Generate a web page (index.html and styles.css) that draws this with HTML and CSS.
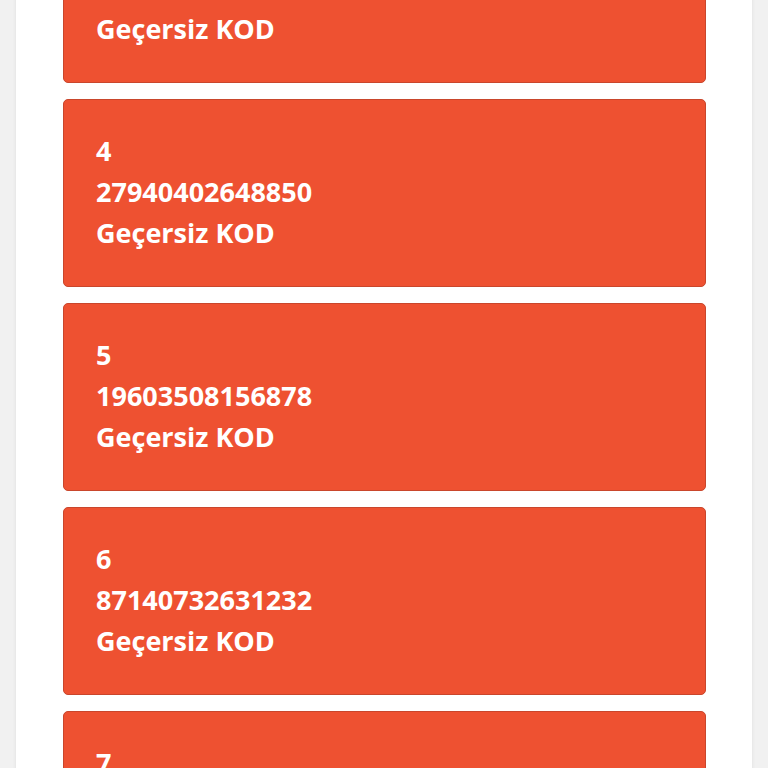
FILE: index.html
```html
<!DOCTYPE html>
<html lang="tr">
<head>
  <meta charset="UTF-8" />
  <meta name="viewport" content="width=device-width, initial-scale=1.0" />
  <title>Kod Kontrol</title>
  <link rel="stylesheet" href="styles.css">
</head>
<body>
  <div class="panel">
    <div class="code-list">
      <div class="code-card">
        <div>3</div>
        <div>51207738104426</div>
        <div>Geçersiz KOD</div>
      </div>
      <div class="code-card">
        <div>4</div>
        <div>27940402648850</div>
        <div>Geçersiz KOD</div>
      </div>
      <div class="code-card">
        <div>5</div>
        <div>19603508156878</div>
        <div>Geçersiz KOD</div>
      </div>
      <div class="code-card">
        <div>6</div>
        <div>87140732631232</div>
        <div>Geçersiz KOD</div>
      </div>
      <div class="code-card">
        <div>7</div>
        <div>40218865307719</div>
        <div>Geçersiz KOD</div>
      </div>
    </div>
  </div>
</body>
</html>
```
FILE: styles.css
```css
body {
  font-family: 'Open Sans', 'Noto Sans', sans-serif;
  background-color: #f1f1f1;
  margin: 0;
  height: 768px;
  overflow: hidden;
}
.panel {
  margin: 0 16px;
  padding: 0 46px 0 47px;
  background-color: #fff;
  box-shadow: 0 0 4px rgba(0,0,0,0.08);
  min-height: 768px;
}
.code-list {
  display: flex;
  flex-direction: column;
  gap: 16px;
  margin-top: -105px;
}
.code-card {
  background-color: #ee5131;
  border: 1px solid #c9462c;
  border-radius: 5px;
  padding: 30px 32px 33px;
  color: #fff;
  font-size: 27px;
  font-weight: 700;
  line-height: 41px;
}
```
